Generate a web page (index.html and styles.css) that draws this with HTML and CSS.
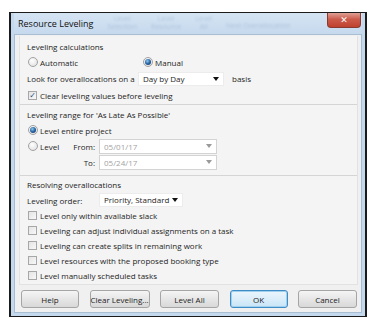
FILE: index.html
```html
<!DOCTYPE html>
<html lang="en">
<head>
    <meta charset="UTF-8">
    <title>Resource Leveling</title>
    <link rel="stylesheet" href="styles.css">
</head>
<body>
    <div class="dialog">
        <div class="title-bar">
            <span class="title">Resource Leveling</span>
            <span class="ghost">Level<br>Selection</span>
            <span class="ghost">Level<br>Resource</span>
            <span class="ghost">Level<br>All</span>
            <span class="ghost wide">Next Overallocation</span>
            <button class="close-btn">&#x2715;</button>
        </div>

        <div class="content">
            <div class="panel">
                <div class="section calc">
                    <div class="row head">Leveling calculations</div>
                    <div class="row">
                        <label class="option auto"><span class="radio"></span>Automatic</label>
                        <label class="option"><span class="radio on"></span>Manual</label>
                    </div>
                    <div class="row tall">
                        <span class="label look">Look for overallocations on a</span>
                        <div class="select basis">Day by Day<span class="arrow"></span></div>
                        <span class="suffix">basis</span>
                    </div>
                    <div class="row">
                        <label class="option"><span class="check on">&#x2713;</span>Clear leveling values before leveling</label>
                    </div>
                </div>

                <div class="section range">
                    <div class="row head">Leveling range for 'As Late As Possible'</div>
                    <div class="row">
                        <label class="option"><span class="radio on"></span>Level entire project</label>
                    </div>
                    <div class="row">
                        <label class="option level"><span class="radio"></span>Level</label>
                        <span class="date-label">From:</span>
                        <div class="select date disabled">05/01/17<span class="arrow"></span></div>
                    </div>
                    <div class="row tall">
                        <span class="level-gap"></span>
                        <span class="date-label">To:</span>
                        <div class="select date disabled">05/24/17<span class="arrow"></span></div>
                    </div>
                </div>

                <div class="section resolve">
                    <div class="row head">Resolving overallocations</div>
                    <div class="row">
                        <span class="label order">Leveling order:</span>
                        <div class="select order-select">Priority, Standard<span class="arrow"></span></div>
                    </div>
                    <div class="row small"><label class="option"><span class="check"></span>Level only within available slack</label></div>
                    <div class="row small"><label class="option"><span class="check"></span>Leveling can adjust individual assignments on a task</label></div>
                    <div class="row small"><label class="option"><span class="check"></span>Leveling can create splits in remaining work</label></div>
                    <div class="row small"><label class="option"><span class="check"></span>Level resources with the proposed booking type</label></div>
                    <div class="row small"><label class="option"><span class="check"></span>Level manually scheduled tasks</label></div>
                </div>
            </div>

            <div class="buttons">
                <button class="btn w58">Help</button>
                <button class="btn w60">Clear Leveling...</button>
                <button class="btn w59">Level All</button>
                <button class="btn w58 default">OK</button>
                <button class="btn w59">Cancel</button>
            </div>
        </div>
    </div>
</body>
</html>
```

FILE: styles.css
```css
:root {
    --frame-color: #c4d8ee;
    --face-color: #f0f0f0;
    --text-color: #1e1e1e;
    --line-color: #d5d5d5;
    --muted-color: #a3a3a3;
}

* {
    box-sizing: border-box;
}

body {
    margin: 0;
    background: #fff;
    font-family: "Open Sans", "Noto Sans", sans-serif;
    font-size: 8px;
    color: var(--text-color);
}

.dialog {
    margin: 12px 0 0 9px;
    width: 358px;
    height: 305px;
    border: 1px solid #1b1b1b;
    border-left-width: 2px;
    border-right-width: 2px;
    background: var(--frame-color);
    padding: 0 3px 3px 3px;
    display: flex;
    flex-direction: column;
}

.title-bar {
    height: 21px;
    display: flex;
    align-items: flex-start;
    gap: 14px;
    padding-left: 4px;
    background: linear-gradient(#d5e4f3, #c6d9ed);
}

.title {
    font-size: 9px;
    line-height: 21px;
    color: #111;
    white-space: nowrap;
}

/* blurred ribbon showing through the glass */
.ghost {
    font-size: 7px;
    line-height: 8px;
    margin-top: 2px;
    color: #7f9cbc;
    opacity: 0.4;
    filter: blur(1px);
    text-align: center;
}

.ghost.wide {
    margin-top: 9px;
}

.close-btn {
    margin-left: auto;
    margin-right: 1px;
    width: 34px;
    height: 15px;
    border: 1px solid #8a3b30;
    border-top: none;
    border-radius: 0 0 4px 4px;
    background: linear-gradient(#e0a196, #cc5b4b 45%, #c0412f);
    color: #fff;
    font-size: 9px;
    font-weight: bold;
    line-height: 13px;
    padding: 0;
    font-family: "DejaVu Sans", sans-serif;
}

.content {
    flex: 1;
    background: var(--face-color);
    border: 1px solid #a9bdd3;
    display: flex;
    flex-direction: column;
}

.panel {
    margin: 1px 3px 0 4px;
    background: #f4f4f4;
    border: 1px solid #e2e2e2;
    border-top: none;
}

.section {
    padding: 0 0 0 7px;
    border-bottom: 1px solid var(--line-color);
}

.section.calc {
    padding-top: 2px;
    padding-bottom: 1px;
}

.section.range {
    padding-top: 1px;
    padding-bottom: 4px;
}

.section.resolve {
    border-bottom: none;
    padding-bottom: 1px;
}

.row {
    height: 16px;
    display: flex;
    align-items: center;
    white-space: nowrap;
}

.row.tall {
    height: 17px;
}

.row.small {
    height: 15px;
}

.row.head {
    color: #222;
}

.option {
    display: flex;
    align-items: center;
    padding-left: 1px;
}

.option.auto {
    width: 115px;
}

.option.level {
    width: 46px;
}

.level-gap {
    width: 46px;
}

.radio {
    width: 10px;
    height: 10px;
    border-radius: 50%;
    border: 1px solid #a2a2a2;
    background: radial-gradient(circle at 40% 35%, #fff, #dcdcdc);
    margin-right: 2px;
    display: flex;
    align-items: center;
    justify-content: center;
}

.radio.on::after {
    content: "";
    width: 6px;
    height: 6px;
    border-radius: 50%;
    background: radial-gradient(circle at 40% 35%, #8ecaf2, #1f5a9a 55%, #163b66);
}

.check {
    width: 9px;
    height: 9px;
    border: 1px solid #a7a7a7;
    background: linear-gradient(135deg, #e4e4e4, #f8f8f8);
    margin-right: 3px;
    font-size: 8px;
    line-height: 7px;
    color: #2a4f86;
    text-align: center;
    font-family: "DejaVu Sans", sans-serif;
}

.label.look {
    width: 111px;
}

.label.order {
    width: 72px;
}

.date-label {
    width: 26px;
    text-align: right;
    padding-right: 4px;
}

.select {
    position: relative;
    height: 14px;
    background: #fff;
    border: 1px solid #ececec;
    padding-left: 4px;
    line-height: 12px;
}

.select .arrow {
    position: absolute;
    right: 4px;
    top: 4px;
    border-left: 3px solid transparent;
    border-right: 3px solid transparent;
    border-top: 4px solid #111;
}

.select.basis {
    width: 86px;
}

.suffix {
    margin-left: 8px;
}

.select.date {
    width: 118px;
    height: 15px;
    line-height: 13px;
}

.select.disabled {
    border-color: #d3d3d3;
    color: var(--muted-color);
}

.select.disabled .arrow {
    border-top-color: #9a9a9a;
}

.select.order-select {
    width: 84px;
    height: 14px;
}

.buttons {
    display: flex;
    justify-content: space-between;
    padding: 5px 4px 0 6px;
}

.btn {
    height: 18px;
    border: 1px solid #a5a5a5;
    border-radius: 3px;
    background: linear-gradient(#f5f5f5, #e6e6e6 50%, #d8d8d8);
    font-family: inherit;
    font-size: 8px;
    color: #222;
    padding: 0;
    white-space: nowrap;
}

.btn.default {
    border-color: #3f8bc4;
    background: linear-gradient(#eaf5fc, #dbeefa 50%, #c8e4f6);
    box-shadow: inset 0 0 0 1px #9fd0f0;
}

.w58 { width: 58px; }
.w59 { width: 59px; }
.w60 { width: 60px; }
```
